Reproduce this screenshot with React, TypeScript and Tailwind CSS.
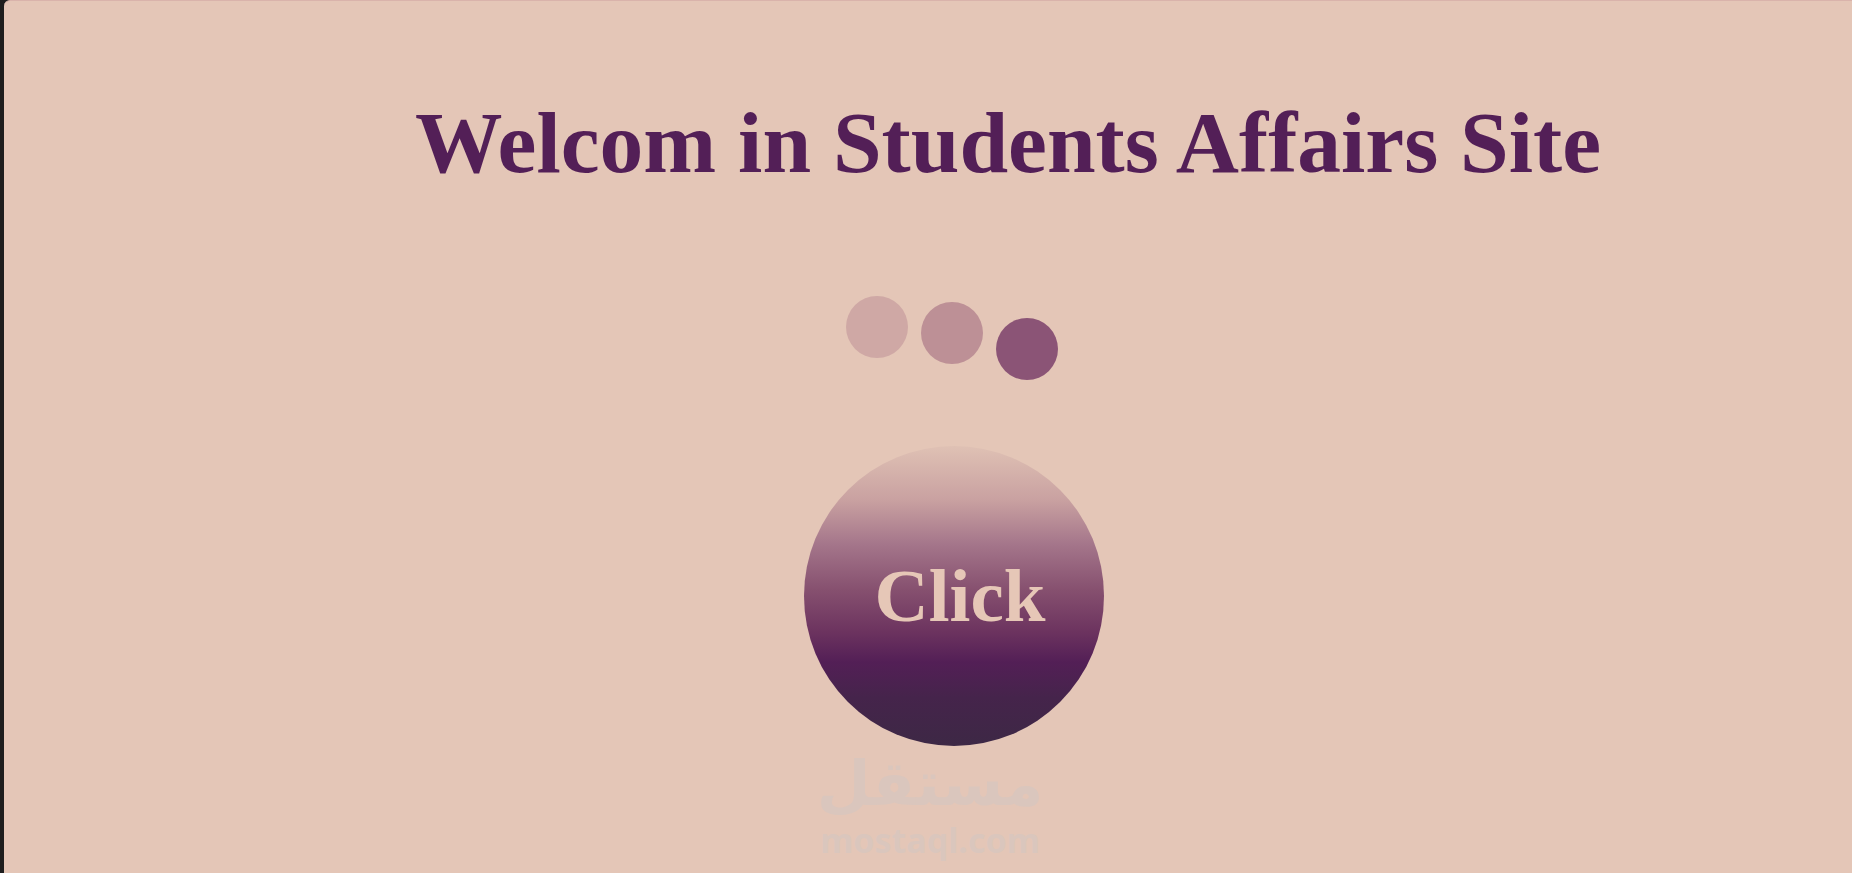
const dots = [
  { color: 'bg-[#cfa8a5]', offset: 'mt-0' },
  { color: 'bg-[#bd9096]', offset: 'mt-[6px]' },
  { color: 'bg-[#8b5476]', offset: 'mt-[22px]' },
]

export default function App() {
  return (
    <div className="flex h-screen w-full bg-[#1e1e1e]">
      <main className="relative ml-[4px] flex flex-1 flex-col items-center overflow-hidden rounded-tl-[6px] border-t border-[#d9b3ab] bg-[#e4c6b7] font-['Liberation_Serif',serif]">
        {/* heading */}
        <h1 className="ml-[160px] mt-[98px] whitespace-nowrap text-[87.5px] font-bold leading-none text-[#531f57]">
          Welcom in Students Affairs Site
        </h1>

        {/* loader dots */}
        <div className="ml-[48px] mt-[109px] flex items-start gap-[13px]">
          {dots.map((d, i) => (
            <span key={i} className={`block h-[62px] w-[62px] rounded-full ${d.color} ${d.offset}`} />
          ))}
        </div>

        {/* main button */}
        <button
          type="button"
          className="ml-[52px] mt-[66px] flex h-[300px] w-[300px] items-center justify-center rounded-full bg-[linear-gradient(to_bottom,#dfc1b4_0%,#c9a1a1_18%,#a4758a_33%,#86506f_48%,#6c335f_62%,#531f56_72%,#45244b_84%,#3d2845_100%)] pl-[12px]"
        >
          <span className="inline-block text-[75px] font-bold leading-none text-[#e6c7b7]">Click</span>
        </button>

        {/* watermark */}
        <span
          dir="rtl"
          className="pointer-events-none absolute left-[4px] right-0 top-[758px] text-center font-['DejaVu_Sans',sans-serif] text-[62px] font-bold leading-[50px] text-[#dac6bd]"
        >
          مستقل
        </span>
        <span className="pointer-events-none absolute left-[4px] right-0 top-[822px] text-center font-['Noto_Sans',sans-serif] text-[34px] font-bold leading-none text-[#dac6bd]">
          mostaql.com
        </span>
      </main>
    </div>
  )
}
